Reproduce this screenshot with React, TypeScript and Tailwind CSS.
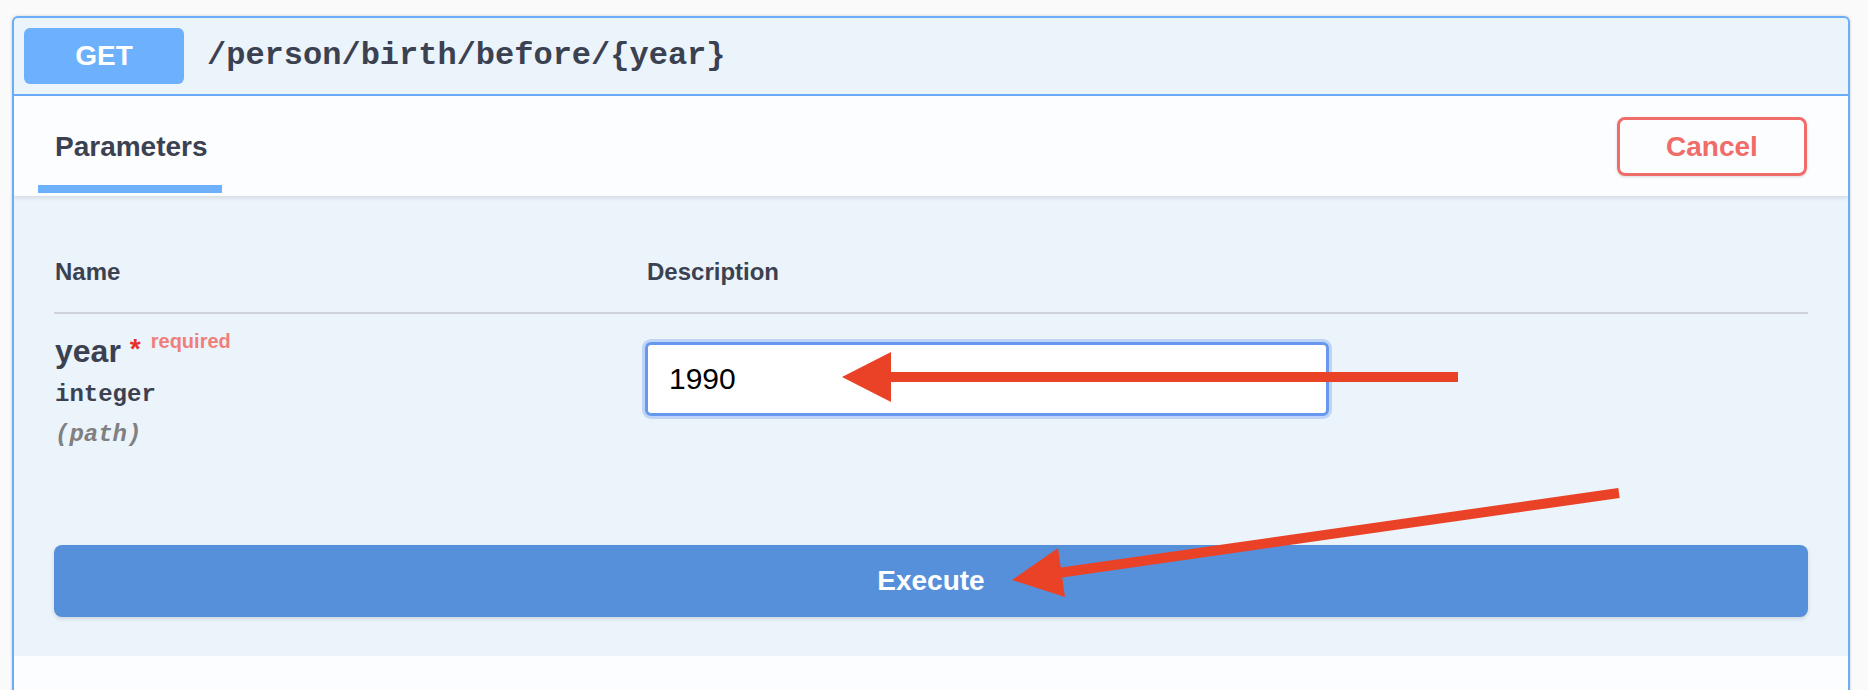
import { useState } from 'react';

const sans = { fontFamily: '"Liberation Sans", Arial, Helvetica, sans-serif' };

export default function App() {
  const [year, setYear] = useState('1990');

  return (
    <div className="relative min-h-[690px] bg-[#fafafa] pt-4 pl-3 pr-[18px] text-[#3b4151] font-['Liberation_Sans',Arial,sans-serif]">
      {/* Operation block */}
      <div className="rounded-[6px] border-2 border-[#6aaef9] bg-[#ebf3fb] shadow-[0_0_3px_rgba(0,0,0,0.19)] overflow-hidden">
        {/* Summary header */}
        <div className="flex h-[78px] items-center border-b-2 border-[#6aaef9] px-[10px]">
          <span className="flex h-[56px] w-[160px] items-center justify-center rounded-[6px] bg-[#6db0fb] text-[28px] font-bold text-white">
            GET
          </span>
          <span className="ml-[23px] font-['Liberation_Mono','Courier_New',monospace] text-[32px] font-bold text-[#3b4151]">
            /person/birth/before/{'{year}'}
          </span>
        </div>

        {/* Tabs */}
        <div className="relative flex h-[100px] items-start justify-between bg-[#fbfdff] pl-6 pr-[41px] shadow-[0_2px_4px_rgba(0,0,0,0.1)]">
          <div className="mt-[33px] flex flex-col">
            <span className="px-[17px] text-[28px] font-bold leading-[36px]">Parameters</span>
            <span className="mt-[20px] h-2 w-[184px] bg-[#6db0fb]" />
          </div>
          <button className="mt-[21px] h-[59px] w-[190px] rounded-[8px] border-[3px] border-[#f06c68] bg-transparent text-[28px] font-bold text-[#f06c68] shadow-[0_1px_3px_rgba(0,0,0,0.15)]">
            Cancel
          </button>
        </div>

        {/* Parameters table */}
        <div className="px-[40px] pt-[60px] pb-[39px]">
          <div className="grid grid-cols-[592px_1fr] border-b-2 border-[#cfd2d8] pb-6 pl-[1px] text-[24px] font-bold leading-[32px]">
            <span>Name</span>
            <span>Description</span>
          </div>

          <div className="grid grid-cols-[590px_1fr] items-start pl-[1px]">
            <div className="mt-[17px] flex flex-col">
              <div className="flex items-start leading-[40px]">
                <span className="text-[32px] font-bold">year</span>
                <span className="ml-[9px] mt-[-2px] text-[28px] font-bold text-[#e8302a]">*</span>
                <span className="ml-[10px] mt-[-10px] text-[20px] font-bold text-[#f07f7c]">required</span>
              </div>
              <span className="mt-[8px] font-['Liberation_Mono','Courier_New',monospace] text-[24px] font-bold leading-[32px]">
                integer
              </span>
              <span className="mt-[8px] font-['Liberation_Mono','Courier_New',monospace] text-[24px] font-bold italic leading-[32px] text-[#808080]">
                (path)
              </span>
            </div>
            <div className="mt-[28px]">
              <input
                value={year}
                onChange={(e) => setYear(e.target.value)}
                style={sans}
                className="h-[74px] w-[684px] rounded-[6px] border-[3px] border-[#6898ee] bg-white pl-[21px] text-[30px] text-black shadow-[0_0_0_3px_#bfd5f8] outline-none"
              />
            </div>
          </div>

          <button className="mt-[94px] flex h-[72px] w-full items-center justify-center rounded-[8px] bg-[#5790da] text-[28px] font-bold text-white shadow-[0_2px_4px_rgba(0,0,0,0.12)]">
            Execute
          </button>
        </div>

        <div className="h-[60px] bg-[#fbfdff]" />
      </div>

      {/* Annotation arrows */}
      <svg className="pointer-events-none absolute left-0 top-0" width="1868" height="690">
        <rect x="889" y="372" width="569" height="10" fill="#e94226" />
        <polygon points="842,377 891,352 891,402" fill="#e94226" />
        <line x1="1619" y1="493" x2="1058" y2="573" stroke="#e94226" strokeWidth="10" />
        <polygon points="1012,580 1058,548 1065,597" fill="#e94226" />
      </svg>
    </div>
  );
}
